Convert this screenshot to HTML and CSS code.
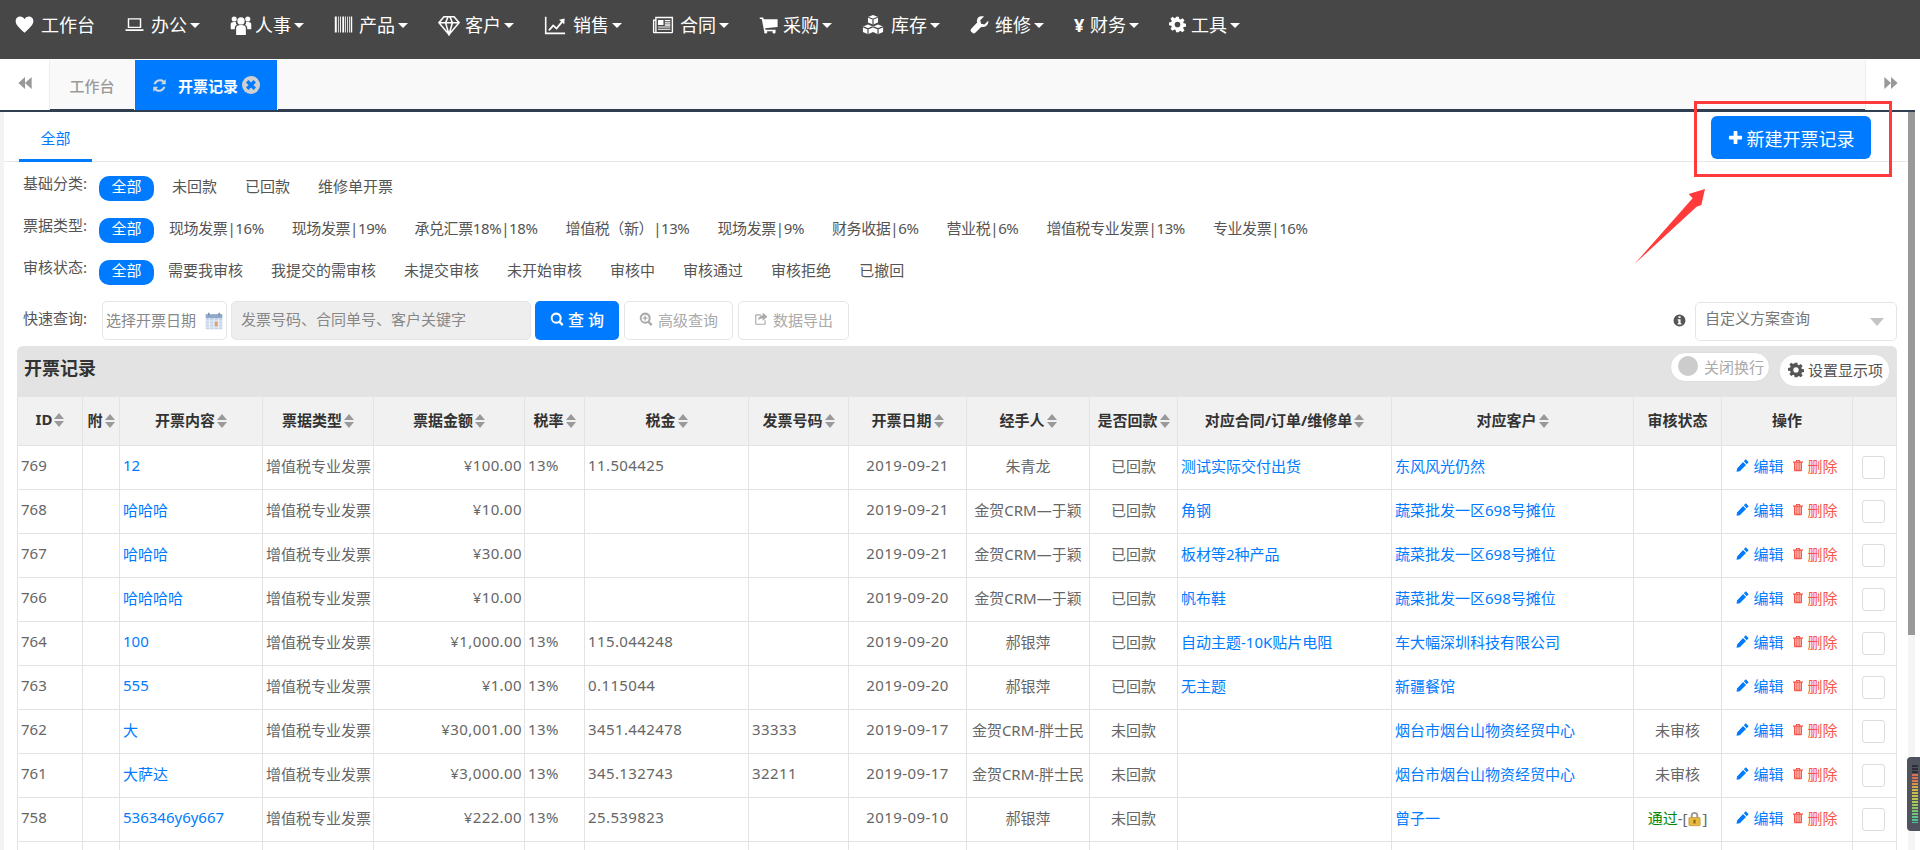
FILE: index.html
```html
<!DOCTYPE html>
<html lang="zh-CN">
<head>
<meta charset="utf-8">
<title>开票记录</title>
<link rel="stylesheet" href="styles.css">
</head>
<body>
<svg class="sprite" xmlns="http://www.w3.org/2000/svg">
  <symbol id="i-heart" viewBox="0 0 24 24"><path d="M12 22.5C5 16 .8 12.3.8 7.6.8 4.2 3.4 2 6.5 2 8.9 2 11 3.4 12 5.4 13 3.4 15.100 2 17.500 2c3.100 0 5.700 2.200 5.700 5.600 0 4.700-4.200 8.400-11.200 14.900z"/></symbol>
  <symbol id="i-laptop" viewBox="0 0 24 24"><path fill-rule="evenodd" d="M3.500 4h17v12.500h-17zM5.300 5.800v8.900h13.400V5.800z"/><path d="M.5 18h23v.8c0 .9-.7 1.500-1.500 1.500H2c-.8 0-1.500-.6-1.500-1.500z"/></symbol>
  <symbol id="i-group" viewBox="0 0 24 24"><circle cx="12" cy="7.500" r="4"/><circle cx="4.600" cy="5.500" r="2.800"/><circle cx="19.400" cy="5.500" r="2.800"/><path d="M6.700 23v-7.500c0-2.200 2-3.500 5.300-3.500s5.300 1.300 5.300 3.500V23z"/><path d="M.8 16.500v-5.500c0-1.500 1.300-2.400 3.800-2.400.8 0 1.500.1 2 .3-.3 1.300.3 2.400 1 3-1.700.7-2.400 2-2.400 3.500v1.100zM23.200 16.500v-5.500c0-1.500-1.300-2.400-3.800-2.400-.8 0-1.500.1-2 .3.300 1.300-.3 2.400-1 3 1.700.7 2.400 2 2.400 3.500v1.100z"/></symbol>
  <symbol id="i-barcode" viewBox="0 0 24 24"><path d="M1 2h2.500v20H1zM5 2h1v20H5zM7.500 2h1.200v20H7.500zM10.500 2h2.300v20h-2.300zM14 2h1v20h-1zM16.500 2h1v20h-1zM19 2h1v20h-1zM21.200 2h1.800v20h-1.800z"/></symbol>
  <symbol id="i-diamond" viewBox="0 0 24 24"><path class="line" d="M6.500 3h11L23 9.500 12 22.500 1 9.500zM1 9.500h22M8.300 9.500L12 22.500l3.700-13L13 3h-2z"/></symbol>
  <symbol id="i-chart" viewBox="0 0 24 24"><path d="M1 3h1.700v17.300H23V22H1z"/><path d="M4.500 17.500l5.400-6.200 3.700 3.200 5-6.200-2.200-2L22.500 5l-.4 6.500-1.900-1.900-6.400 7.600-3.600-3.200-4 4.300z"/></symbol>
  <symbol id="i-news" viewBox="0 0 24 24"><path fill-rule="evenodd" d="M3.500 3H23v16.500c0 1-.7 1.500-1.500 1.500h-19C1.500 21 1 20.300 1 19.500V6h2.500zM2.500 7.500v12h1v-12zM5 4.500v15h16.500v-15z"/><path d="M6.500 6.500h6v5.500h-6zM14 6.500h6v1.400h-6zM14 9h6v1.400h-6zM14 11.300h6v1.400h-6zM6.500 13.500h13.500v1.300H6.500zM6.500 16h13.500v1.300H6.500z"/></symbol>
  <symbol id="i-cart" viewBox="0 0 24 24"><path d="M1 3h4.300l.7 2.500h17.500v9.500L7.800 16.700l.4 1.800H21v2H6.500L3.500 5H1z"/><circle cx="8.500" cy="21.500" r="2"/><circle cx="19" cy="21.500" r="2"/></symbol>
  <symbol id="i-cubes" viewBox="0 0 24 24"><path class="cube" d="M12 1l5.500 2.200v6L12 11.500 6.500 9.200v-6zM6.500 11.500L12 13.700v6L6.500 22 1 19.700v-6zM17.500 11.500l5.500 2.200v6L17.500 22 12 19.700v-6z"/><path class="cube-line" d="M6.800 3.500L12 5.700l5.200-2.200M12 5.700v5.500M1.300 14L6.500 16.200 11.700 14M6.500 16.200v5.500M12.300 14l5.200 2.200L22.700 14M17.500 16.200v5.500"/></symbol>
  <symbol id="i-wrench" viewBox="0 0 24 24"><path d="M23 7.300l-4.800 4.800-4.200-1.200-1.100-4.200L17.700 2c-3-1-6.500-.3-8 2-1.200 1.900-1.200 4-.6 5.600L1.500 17.300c-1 1-1 2.700 0 3.700l1.500 1.500c1 1 2.700 1 3.700 0l7.700-7.700c1.900.7 4.200.5 6-.9 2.300-1.700 3.300-4.400 2.600-6.600z"/></symbol>
  <symbol id="i-cog" viewBox="0 0 24 24"><path fill-rule="evenodd" d="M10 1h4l.6 3.300 1.700.7 2.800-1.900 2.800 2.800-1.900 2.800.7 1.700 3.300.6v4l-3.300.6-.7 1.700 1.900 2.800-2.800 2.800-2.800-1.900-1.700.7L14 23h-4l-.6-3.300-1.700-.7-2.800 1.900-2.800-2.800L4 15.300l-.7-1.700L0 13v-4l3.300-.6.700-1.700L2.100 3.900 4.900 1.100l2.800 1.900 1.700-.7zM12 8a4 4 0 1 0 0 8 4 4 0 0 0 0-8z"/></symbol>
  <symbol id="i-plus" viewBox="0 0 24 24"><path d="M9 2.500c0-.5.400-1 1-1h4c.6 0 1 .5 1 1V9h6.500c.5 0 1 .4 1 1v4c0 .6-.5 1-1 1H15v6.500c0 .5-.4 1-1 1h-4c-.6 0-1-.5-1-1V15H2.500c-.5 0-1-.4-1-1v-4c0-.6.500-1 1-1H9z"/></symbol>
  <symbol id="i-refresh" viewBox="0 0 24 24"><path d="M22 2v8h-8l3-3a7 7 0 0 0-11 3H2.500A10.500 10.500 0 0 1 19.500 4.500zM2 22v-8h8l-3 3a7 7 0 0 0 11-3h3.500A10.500 10.500 0 0 1 4.500 19.500z"/></symbol>
  <symbol id="i-close" viewBox="0 0 24 24"><circle cx="12" cy="12" r="12" fill="#cfcfcf"/><path d="M7 7l10 10M17 7L7 17" stroke="#007bff" stroke-width="4.500" fill="none"/></symbol>
  <symbol id="i-back" viewBox="0 0 24 24"><path d="M12 3v18L2 12zM22 3v18L12 12z"/></symbol>
  <symbol id="i-fwd" viewBox="0 0 24 24"><path d="M2 3v18l10-9zM12 3v18l10-9z"/></symbol>
  <symbol id="i-search" viewBox="0 0 24 24"><path fill-rule="evenodd" d="M10.500 1a9.500 9.500 0 0 1 7.700 15l5 5-2.800 2.800-5-5A9.500 9.500 0 1 1 10.500 1zm0 3.500a6 6 0 1 0 0 12 6 6 0 0 0 0-12z"/></symbol>
  <symbol id="i-zoomin" viewBox="0 0 24 24"><path fill-rule="evenodd" d="M10.500 1a9.500 9.500 0 0 1 7.700 15l5 5-2.800 2.800-5-5A9.500 9.500 0 1 1 10.500 1zm0 3.500a6 6 0 1 0 0 12 6 6 0 0 0 0-12z"/><path d="M9.300 6.500h2.400v2.800h2.800v2.400h-2.800v2.800H9.300v-2.800H6.500V9.300h2.800z"/></symbol>
  <symbol id="i-share" viewBox="0 0 24 24"><path d="M3.500 4H12v2H4v14h14v-6h2v6.500c0 1-.6 1.500-1.500 1.500h-15C2.500 22 2 21.500 2 20.500v-15C2 4.500 2.500 4 3.500 4z"/><path d="M15 1l8 7-8 7v-4c-4 0-6.500 1-8 4 0-5.500 3-9 8-9.500z"/></symbol>
  <symbol id="i-info" viewBox="0 0 24 24"><path fill-rule="evenodd" d="M12 1a11 11 0 1 1 0 22 11 11 0 0 1 0-22zM10 4v3.500h4V4zM8.500 9.500v2.500H10v5H8.500v2.500h7V17H14V9.500z"/></symbol>
  <symbol id="i-pencil" viewBox="0 0 24 24"><path d="M17 1.500c.6-.6 1.500-.6 2 0l3.500 3.500c.6.5.6 1.400 0 2L20 9.500 14.500 4zM13 5.500L18.500 11 7 22.500 1 23.500l1-6z"/></symbol>
  <symbol id="i-trash" viewBox="0 0 24 24"><path fill-rule="evenodd" d="M8.500 1h7l1.500 3h5v2.500h-2V21c0 1.500-1 2.500-2.300 2.500H6.300C5 23.500 4 22.500 4 21V6.500H2V4h5zM9.500 4h5l-.6-1h-3.800zM7 6.500V20.500h1.500V6.500zM11.200 6.500v14h1.600v-14zM15.500 6.500v14H17v-14z"/></symbol>
  <symbol id="i-cal" viewBox="0 0 24 24"><rect x="1" y="3" width="22" height="20" fill="#c5d3e6"/><rect x="1" y="3" width="22" height="5" fill="#8fa8c9"/><rect x="4" y="1" width="2" height="4" fill="#7b8da6"/><rect x="18" y="1" width="2" height="4" fill="#7b8da6"/><path d="M1 12h22M1 16h22M1 20h22M6 8v15M12 8v15M18 8v15" stroke="#eef2f8" stroke-width="1.200"/><rect x="13" y="13" width="4" height="6" fill="#e3a06f"/></symbol>
  <symbol id="i-lock" viewBox="0 0 24 24"><path d="M6 11V7.500a6 6 0 0 1 12 0V11h-3V7.500a3 3 0 0 0-6 0V11z" fill="#9a9a9a"/><rect x="3" y="10.500" width="18" height="13" rx="1.500" fill="#e8b93f" stroke="#b8862a"/><rect x="10.300" y="14" width="3.400" height="6" fill="#8a6418"/></symbol>
</svg>

<nav class="topnav">
  <a class="nav-item"><span class="nav-icon w26"><svg><use href="#i-heart"/></svg></span>工作台</a>
  <a class="nav-item"><span class="nav-icon w26"><svg><use href="#i-laptop"/></svg></span>办公<span class="caret"></span></a>
  <a class="nav-item"><span class="nav-icon w25 big"><svg><use href="#i-group"/></svg></span>人事<span class="caret"></span></a>
  <a class="nav-item"><span class="nav-icon w25"><svg><use href="#i-barcode"/></svg></span>产品<span class="caret"></span></a>
  <a class="nav-item"><span class="nav-icon w27 big"><svg><use href="#i-diamond"/></svg></span>客户<span class="caret"></span></a>
  <a class="nav-item"><span class="nav-icon w29 big"><svg><use href="#i-chart"/></svg></span>销售<span class="caret"></span></a>
  <a class="nav-item"><span class="nav-icon w28 big"><svg><use href="#i-news"/></svg></span>合同<span class="caret"></span></a>
  <a class="nav-item"><span class="nav-icon w24"><svg><use href="#i-cart"/></svg></span>采购<span class="caret"></span></a>
  <a class="nav-item"><span class="nav-icon w29 big"><svg><use href="#i-cubes"/></svg></span>库存<span class="caret"></span></a>
  <a class="nav-item"><span class="nav-icon w25"><svg><use href="#i-wrench"/></svg></span>维修<span class="caret"></span></a>
  <a class="nav-item"><span class="nav-icon w16 yen">¥</span>财务<span class="caret"></span></a>
  <a class="nav-item"><span class="nav-icon w22 small"><svg><use href="#i-cog"/></svg></span>工具<span class="caret"></span></a>
</nav>

<div class="shell">
  <div class="tabstrip">
    <div class="tab-arrow"><svg><use href="#i-back"/></svg></div>
    <div class="tab">工作台</div>
    <div class="tab tab-active">
      <svg class="tab-refresh"><use href="#i-refresh"/></svg>
      <span>开票记录</span>
      <svg class="tab-close"><use href="#i-close"/></svg>
    </div>
    <div class="tab-fill"></div>
    <div class="tab-arrow tab-arrow-right"><svg><use href="#i-fwd"/></svg></div>
  </div>

  <div class="pane">
    <main class="content">
      <div class="subtabs">
        <a class="subtab">全部</a>
        <a class="btn-new"><svg><use href="#i-plus"/></svg>新建开票记录</a>
      </div>

      <section class="filters">
        <div class="filter-row filter-row-wide">
          <span class="filter-label">基础分类:</span>
          <a class="chip chip-on">全部</a><a class="chip">未回款</a><a class="chip">已回款</a><a class="chip">维修单开票</a>
        </div>
        <div class="filter-row filter-row-tight">
          <span class="filter-label">票据类型:</span>
          <a class="chip chip-on">全部</a><a class="chip">现场发票|16%</a><a class="chip">现场发票|19%</a><a class="chip">承兑汇票18%|18%</a><a class="chip">增值税（新）|13%</a><a class="chip">现场发票|9%</a><a class="chip">财务收据|6%</a><a class="chip">营业税|6%</a><a class="chip">增值税专业发票|13%</a><a class="chip">专业发票|16%</a>
        </div>
        <div class="filter-row">
          <span class="filter-label">审核状态:</span>
          <a class="chip chip-on">全部</a><a class="chip">需要我审核</a><a class="chip">我提交的需审核</a><a class="chip">未提交审核</a><a class="chip">未开始审核</a><a class="chip">审核中</a><a class="chip">审核通过</a><a class="chip">审核拒绝</a><a class="chip">已撤回</a>
        </div>
      </section>

      <section class="query">
        <span class="query-label">快速查询:</span>
        <div class="date-box">选择开票日期<svg><use href="#i-cal"/></svg></div>
        <div class="kw-box">发票号码、合同单号、客户关键字</div>
        <a class="btn-query"><svg><use href="#i-search"/></svg>查 询</a>
        <a class="btn-ghost btn-adv"><svg><use href="#i-zoomin"/></svg>高级查询</a>
        <a class="btn-ghost btn-exp"><svg><use href="#i-share"/></svg>数据导出</a>
        <svg class="info-icon"><use href="#i-info"/></svg>
        <div class="scheme-select">自定义方案查询<span class="scheme-caret"></span></div>
      </section>

      <section class="card">
        <header class="card-head">
          <h2 class="card-title">开票记录</h2>
          <div class="toggle"><span class="toggle-dot"></span>关闭换行</div>
          <a class="btn-columns"><svg><use href="#i-cog"/></svg>设置显示项</a>
        </header>
        <table class="grid">
          <colgroup>
            <col class="c-id"><col class="c-att"><col class="c-content"><col class="c-type"><col class="c-amount"><col class="c-rate"><col class="c-tax"><col class="c-no"><col class="c-date"><col class="c-owner"><col class="c-paid"><col class="c-order"><col class="c-cust"><col class="c-status"><col class="c-act"><col class="c-check">
          </colgroup>
          <thead>
            <tr>
              <th>ID<i class="sort"></i></th><th>附<i class="sort"></i></th><th>开票内容<i class="sort"></i></th><th>票据类型<i class="sort"></i></th><th>票据金额<i class="sort"></i></th><th>税率<i class="sort"></i></th><th>税金<i class="sort"></i></th><th>发票号码<i class="sort"></i></th><th>开票日期<i class="sort"></i></th><th>经手人<i class="sort"></i></th><th>是否回款<i class="sort"></i></th><th>对应合同/订单/维修单<i class="sort"></i></th><th>对应客户<i class="sort"></i></th><th>审核状态</th><th>操作</th><th></th>
            </tr>
          </thead>
          <tbody>
            <tr><td>769</td><td></td><td><a class="link">12</a></td><td>增值税专业发票</td><td class="r n">¥100.00</td><td class="n">13%</td><td class="n">11.504425</td><td class="n"></td><td class="c n">2019-09-21</td><td class="c">朱青龙</td><td class="c">已回款</td><td><a class="link">测试实际交付出货</a></td><td><a class="link">东风风光仍然</a></td><td class="c"></td><td class="c"><a class="act-edit"><svg><use href="#i-pencil"/></svg>编辑</a><a class="act-del"><svg><use href="#i-trash"/></svg>删除</a></td><td class="c box"><span class="check"></span></td></tr>
            <tr><td>768</td><td></td><td><a class="link">哈哈哈</a></td><td>增值税专业发票</td><td class="r n">¥10.00</td><td></td><td></td><td></td><td class="c n">2019-09-21</td><td class="c">金贺CRM—于颖</td><td class="c">已回款</td><td><a class="link">角钢</a></td><td><a class="link">蔬菜批发一区698号摊位</a></td><td class="c"></td><td class="c"><a class="act-edit"><svg><use href="#i-pencil"/></svg>编辑</a><a class="act-del"><svg><use href="#i-trash"/></svg>删除</a></td><td class="c box"><span class="check"></span></td></tr>
            <tr><td>767</td><td></td><td><a class="link">哈哈哈</a></td><td>增值税专业发票</td><td class="r n">¥30.00</td><td></td><td></td><td></td><td class="c n">2019-09-21</td><td class="c">金贺CRM—于颖</td><td class="c">已回款</td><td><a class="link">板材等2种产品</a></td><td><a class="link">蔬菜批发一区698号摊位</a></td><td class="c"></td><td class="c"><a class="act-edit"><svg><use href="#i-pencil"/></svg>编辑</a><a class="act-del"><svg><use href="#i-trash"/></svg>删除</a></td><td class="c box"><span class="check"></span></td></tr>
            <tr><td>766</td><td></td><td><a class="link">哈哈哈哈</a></td><td>增值税专业发票</td><td class="r n">¥10.00</td><td></td><td></td><td></td><td class="c n">2019-09-20</td><td class="c">金贺CRM—于颖</td><td class="c">已回款</td><td><a class="link">帆布鞋</a></td><td><a class="link">蔬菜批发一区698号摊位</a></td><td class="c"></td><td class="c"><a class="act-edit"><svg><use href="#i-pencil"/></svg>编辑</a><a class="act-del"><svg><use href="#i-trash"/></svg>删除</a></td><td class="c box"><span class="check"></span></td></tr>
            <tr><td>764</td><td></td><td><a class="link">100</a></td><td>增值税专业发票</td><td class="r n">¥1,000.00</td><td class="n">13%</td><td class="n">115.044248</td><td></td><td class="c n">2019-09-20</td><td class="c">郝银萍</td><td class="c">已回款</td><td><a class="link">自动主题-10K贴片电阻</a></td><td><a class="link">车大幅深圳科技有限公司</a></td><td class="c"></td><td class="c"><a class="act-edit"><svg><use href="#i-pencil"/></svg>编辑</a><a class="act-del"><svg><use href="#i-trash"/></svg>删除</a></td><td class="c box"><span class="check"></span></td></tr>
            <tr><td>763</td><td></td><td><a class="link">555</a></td><td>增值税专业发票</td><td class="r n">¥1.00</td><td class="n">13%</td><td class="n">0.115044</td><td></td><td class="c n">2019-09-20</td><td class="c">郝银萍</td><td class="c">已回款</td><td><a class="link">无主题</a></td><td><a class="link">新疆餐馆</a></td><td class="c"></td><td class="c"><a class="act-edit"><svg><use href="#i-pencil"/></svg>编辑</a><a class="act-del"><svg><use href="#i-trash"/></svg>删除</a></td><td class="c box"><span class="check"></span></td></tr>
            <tr><td>762</td><td></td><td><a class="link">大</a></td><td>增值税专业发票</td><td class="r n">¥30,001.00</td><td class="n">13%</td><td class="n">3451.442478</td><td class="n">33333</td><td class="c n">2019-09-17</td><td class="c">金贺CRM-胖士民</td><td class="c">未回款</td><td></td><td><a class="link">烟台市烟台山物资经贸中心</a></td><td class="c">未审核</td><td class="c"><a class="act-edit"><svg><use href="#i-pencil"/></svg>编辑</a><a class="act-del"><svg><use href="#i-trash"/></svg>删除</a></td><td class="c box"><span class="check"></span></td></tr>
            <tr><td>761</td><td></td><td><a class="link">大萨达</a></td><td>增值税专业发票</td><td class="r n">¥3,000.00</td><td class="n">13%</td><td class="n">345.132743</td><td class="n">32211</td><td class="c n">2019-09-17</td><td class="c">金贺CRM-胖士民</td><td class="c">未回款</td><td></td><td><a class="link">烟台市烟台山物资经贸中心</a></td><td class="c">未审核</td><td class="c"><a class="act-edit"><svg><use href="#i-pencil"/></svg>编辑</a><a class="act-del"><svg><use href="#i-trash"/></svg>删除</a></td><td class="c box"><span class="check"></span></td></tr>
            <tr><td>758</td><td></td><td><a class="link">536346y6y667</a></td><td>增值税专业发票</td><td class="r n">¥222.00</td><td class="n">13%</td><td class="n">25.539823</td><td></td><td class="c n">2019-09-10</td><td class="c">郝银萍</td><td class="c">未回款</td><td></td><td><a class="link">曾子一</a></td><td class="c"><span class="pass">通过</span>-[<svg class="lock"><use href="#i-lock"/></svg>]</td><td class="c"><a class="act-edit"><svg><use href="#i-pencil"/></svg>编辑</a><a class="act-del"><svg><use href="#i-trash"/></svg>删除</a></td><td class="c box"><span class="check"></span></td></tr>
            <tr><td></td><td></td><td></td><td></td><td></td><td></td><td></td><td></td><td></td><td></td><td></td><td></td><td></td><td></td><td></td><td></td></tr>
          </tbody>
        </table>
      </section>
    </main>
    <div class="scrollbar"><div class="scroll-thumb"></div></div>
  </div>
</div>

<div class="annot-box"></div>
<svg class="annot-arrow" viewBox="1630 185 80 85"><polygon points="1705,189 1688.700,194 1692.600,198.300 1634.500,264 1696.600,206.700 1701.300,205"/></svg>
<div class="meter"><div class="meter-bars"></div></div>
</body>
</html>
```

FILE: styles.css
```css
* { box-sizing: border-box; }
html, body { margin: 0; height: 850px; overflow: hidden; background: #fff; }
body {
  position: relative;
  font-family: "Noto Sans", "Noto Sans CJK SC", sans-serif;
  font-size: 15px;
  color: #666;
}
a { text-decoration: none; }
.sprite { position: absolute; width: 0; height: 0; overflow: hidden; }
svg { fill: currentColor; display: block; }

/* top navigation */
.topnav {
  display: flex;
  align-items: center;
  height: 59px;
  padding-bottom: 10px;
  background: #474747;
  color: #fff;
  font-size: 18px;
  line-height: 24px;
}
.nav-item { display: flex; align-items: center; padding: 0 15px; color: #fff; white-space: nowrap; }
.nav-icon { flex: none; display: block; }
.nav-icon svg { width: 19px; height: 19px; }
.nav-icon.big svg { width: 22px; height: 22px; }
.nav-icon.small svg { width: 17px; height: 17px; }
.w16 { width: 16px; } .w22 { width: 22px; } .w24 { width: 24px; } .w25 { width: 25px; }
.w26 { width: 26px; } .w27 { width: 27px; } .w28 { width: 28px; } .w29 { width: 29px; }
.yen { font-weight: 700; font-size: 18px; }
.line { fill: none; stroke: currentColor; stroke-width: 1.7; }
.cube { fill: #fff; }
.cube-line { fill: none; stroke: #474747; stroke-width: 1.3; }
.caret {
  width: 0; height: 0; margin-left: 3px; margin-top: 2px;
  border-left: 5px solid transparent;
  border-right: 5px solid transparent;
  border-top: 5px solid #fff;
}

/* shell below the nav */
.shell { display: flex; flex-direction: column; height: 791px; padding-right: 5px; }

/* tab strip */
.tabstrip {
  display: flex;
  height: 52px;
  flex: none;
  margin-top: 1px;
  background: #f9f9f9;
  border-bottom: 3px solid #2f3e50;
}
.tab-arrow {
  display: flex; align-items: center; justify-content: center;
  width: 50px; height: 50px;
  background: #fff;
  border-right: 1px solid #eee;
  color: #999;
}
.tab-arrow svg { width: 16px; height: 16px; margin-top: -4px; }
.tab-arrow-right { border-right: 0; border-left: 1px solid #eee; }
.tab {
  display: flex; align-items: center; justify-content: center;
  width: 84px; height: 50px;
  font-weight: 500; color: #999;
}
.tab-active {
  gap: 0;
  justify-content: flex-start;
  width: 144px;
  padding-left: 17px;
  background: #007bff;
  border-left: 1px solid #fff;
  border-right: 1px solid #fff;
  color: #fff;
  font-weight: 700;
}
.tab-refresh { width: 15px; height: 15px; margin-right: 11px; color: #cfd6de; }
.tab-close { width: 18px; height: 18px; margin-left: 4px; }
.tab-fill { flex: 1; }

/* content pane */
.pane { flex: 1; display: flex; min-height: 0; }
.content {
  flex: 1;
  min-width: 0;
  overflow: hidden;
  border-left: 4px solid #f3f3f3;
  padding-right: 11px;
}
.scrollbar { flex: none; width: 7px; background: #f5f5f5; }
.scroll-thumb { height: 523px; background: #999; }

/* sub tabs */
.subtabs {
  display: flex;
  justify-content: space-between;
  align-items: flex-start;
  height: 50px;
  margin-right: -11px;
  padding-right: 37px;
  border-bottom: 1px solid #e8e8e8;
}
.subtab {
  width: 73px; height: 50px;
  margin-left: 15px;
  text-align: center;
  line-height: 52px;
  color: #007bff;
  border-bottom: 3px solid #007bff;
}
.btn-new {
  display: flex; align-items: center; justify-content: center;
  width: 160px; height: 43px;
  margin-top: 4px;
  background: #007bff;
  border-radius: 6px;
  color: #fff;
  font-size: 18px;
}
.btn-new svg { width: 15px; height: 15px; margin-right: 4px; }

/* filters */
.filters { display: flex; flex-direction: column; gap: 17px; padding: 14px 0 0 19px; }
.filter-row { display: flex; align-items: flex-start; height: 25px; white-space: nowrap; }
.filter-label { width: 76px; flex: none; line-height: 15px; color: #555; }
.chip { height: 25px; padding: 0 14px; line-height: 21px; color: #555; }
.chip-on { padding: 0 12.500px; background: #007bff; border-radius: 10px; color: #fff; }
.filter-row-wide .chip-on { margin-right: 4px; }
.filter-row-tight .chip { letter-spacing: -.4px; }
.filter-row-tight .chip-on { letter-spacing: 0; margin-right: 1px; }

/* quick query */
.query { display: flex; align-items: flex-start; height: 39px; margin-top: 16px; padding-left: 19px; white-space: nowrap; }
.query-label { width: 79px; flex: none; line-height: 35px; color: #555; }
.date-box {
  display: flex; align-items: center; justify-content: space-between;
  width: 125px; height: 39px;
  padding: 0 3px 3px;
  border: 1px solid #e5e5e5;
  border-radius: 5px;
  color: #888;
}
.date-box svg { width: 18px; height: 18px; margin-top: 3px; }
.kw-box {
  width: 300px; height: 39px;
  margin-left: 4px;
  padding-left: 9px;
  line-height: 34px;
  background: #eee;
  border: 1px solid #e5e5e5;
  border-radius: 5px;
  color: #888;
}
.btn-query {
  display: flex; align-items: center; justify-content: center;
  width: 84px; height: 39px;
  margin-left: 4px;
  padding-bottom: 3px;
  background: #007bff;
  border-radius: 5px;
  color: #fff;
  font-size: 16px;
  font-weight: 500;
}
.btn-query svg { width: 14px; height: 14px; margin-right: 4px; }
.btn-ghost {
  display: flex; align-items: center; justify-content: center;
  height: 39px;
  margin-left: 5px;
  padding-bottom: 3px;
  background: #fff;
  border: 1px solid #e5e5e5;
  border-radius: 5px;
  color: #aaa;
}
.btn-ghost svg { width: 14px; height: 14px; margin-right: 5px; }
.btn-adv { width: 109px; }
.btn-exp { width: 111px; }
.info-icon { width: 13px; height: 13px; margin: 13px 9px 0 auto; color: #555; }
.scheme-select {
  position: relative;
  width: 202px; height: 39px;
  margin-top: 1px;
  padding-left: 9px;
  line-height: 30px;
  border: 1px solid #e5e5e5;
  border-radius: 5px;
  color: #777;
}
.scheme-caret {
  position: absolute; right: 12px; top: 15px;
  width: 0; height: 0;
  border-left: 7px solid transparent;
  border-right: 7px solid transparent;
  border-top: 8px solid #c4c4c4;
}

/* card */
.card { margin: 6px 0 0 13px; width: 1880px; }
.card-head {
  display: flex;
  align-items: flex-start;
  height: 50px;
  padding: 6px 8px 0 7px;
  background: #e3e3e3;
  border-radius: 6px 6px 0 0;
}
.card-title { margin: 0 auto 0 0; font-size: 18px; line-height: 32px; font-weight: 700; color: #333; }
.toggle {
  display: flex; align-items: center;
  width: 100px; height: 30px;
  padding: 0 0 2px 7px;
  background: #fff;
  border: 1px solid #ddd;
  border-radius: 15px;
  color: #aaa;
  white-space: nowrap;
}
.toggle-dot { width: 20px; height: 20px; margin-right: 6px; background: #ccc; border-radius: 50%; flex: none; }
.btn-columns {
  display: flex; align-items: center;
  width: 109px; height: 31px;
  margin: 3px 0 0 10px;
  padding: 0 0 2px 8px;
  background: #fff;
  border-radius: 15px;
  color: #555;
  white-space: nowrap;
}
.btn-columns svg { width: 16px; height: 16px; margin-right: 4px; }

/* table */
.grid { width: 1879px; table-layout: fixed; border-collapse: collapse; }
.c-id { width: 65px; } .c-att { width: 37px; } .c-content { width: 143px; } .c-type { width: 111px; }
.c-amount { width: 151px; } .c-rate { width: 60px; } .c-tax { width: 164px; } .c-no { width: 100px; }
.c-date { width: 118px; } .c-owner { width: 123px; } .c-paid { width: 88px; } .c-order { width: 214px; }
.c-cust { width: 242px; } .c-status { width: 88px; } .c-act { width: 131px; } .c-check { width: 44px; }
.grid th, .grid td { border: 1px solid #e3e3e3; white-space: nowrap; overflow: hidden; }
.grid th {
  height: 49px;
  padding: 0 0 4px;
  background: #f1f1f1;
  color: #333;
  font-size: 15px;
  font-weight: 700;
  text-align: center;
}
.grid td { height: 44px; padding: 0 3px 5px; font-size: 15px; color: #666; }
.grid td.r { text-align: right; padding-right: 2px; }
.grid td.c { text-align: center; }
.grid td.n { letter-spacing: .4px; }
.grid td.box { padding: 0 2px 1px 0; }
.link { color: #007bff; }
.sort {
  position: relative;
  display: inline-block;
  width: 10px; height: 14px;
  margin-left: 2px;
  vertical-align: -2px;
}
.sort::before, .sort::after {
  content: "";
  position: absolute; left: 0;
  border-left: 5px solid transparent;
  border-right: 5px solid transparent;
}
.sort::before { top: 0; border-bottom: 6px solid #999; }
.sort::after { bottom: 0; border-top: 6px solid #999; }
.act-edit, .act-del { display: inline-flex; align-items: center; }
.act-edit { color: #007bff; margin-right: 8px; }
.act-del { color: #f5574a; }
.act-edit svg { width: 13px; height: 13px; margin-right: 4px; }
.act-del svg { width: 12px; height: 13px; margin-right: 4px; }
.check { display: block; width: 23px; height: 23px; margin: 0 auto; background: #fff; border: 1px solid #ddd; border-radius: 3px; }
.pass { color: #080; }
.lock { display: inline-block; width: 15px; height: 17px; vertical-align: -3px; }

/* overlays */
.annot-box {
  position: absolute; left: 1694px; top: 101px;
  width: 198px; height: 76px;
  border: 3px solid #ff3a3a;
}
.annot-arrow { position: absolute; left: 1630px; top: 185px; width: 80px; height: 85px; fill: #ff3a3a; }
.meter {
  position: absolute; right: 0; top: 757px;
  width: 13px; height: 74px;
  padding: 8px 2px 8px 5px;
  background: #50535e;
  border-radius: 4px 0 0 4px;
}
.meter-bars {
  height: 100%;
  background:
    repeating-linear-gradient(to bottom, transparent 0 2px, #50535e 2px 3px),
    linear-gradient(to bottom, #2c2e35 0 14%, #d9734f 14% 26%, #d6b04a 40%, #b7c94e 60%, #7fc46a 78%, #48c2a0 100%);
}
```
